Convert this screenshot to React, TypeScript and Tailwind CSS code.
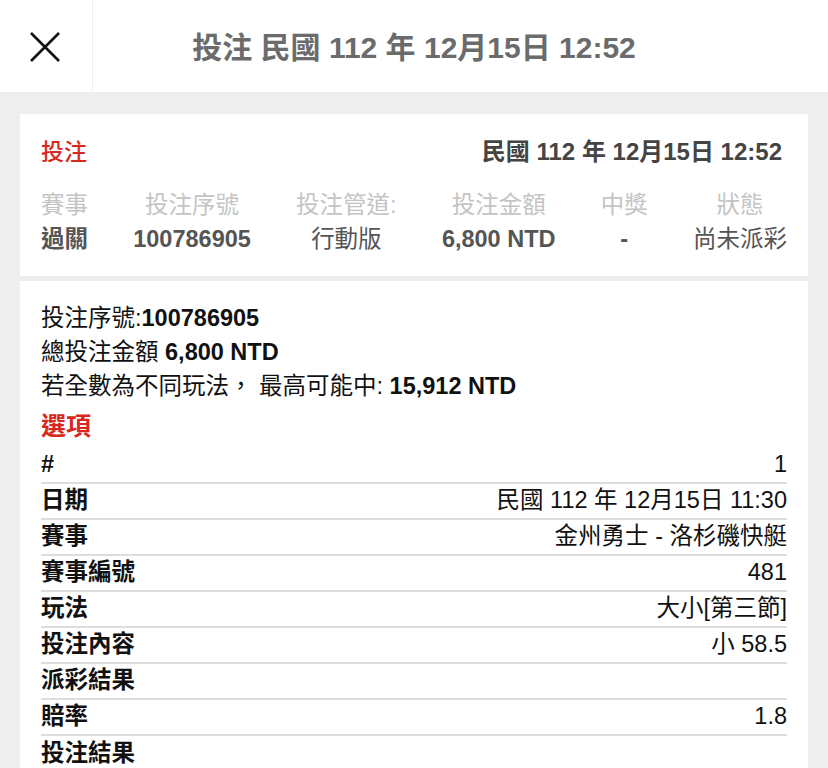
import React from "react";

const font = { fontFamily: '"Liberation Sans", "Noto Sans CJK TC", sans-serif' };

const cols = [
  { label: "賽事", value: "過關", bold: true },
  { label: "投注序號", value: "100786905", bold: true },
  { label: "投注管道:", value: "行動版", bold: false },
  { label: "投注金額", value: "6,800 NTD", bold: true },
  { label: "中獎", value: "-", bold: true },
  { label: "狀態", value: "尚未派彩", bold: false },
];

const rows: [string, string][] = [
  ["#", "1"],
  ["日期", "民國 112 年 12月15日 11:30"],
  ["賽事", "金州勇士 - 洛杉磯快艇"],
  ["賽事編號", "481"],
  ["玩法", "大小[第三節]"],
  ["投注內容", "小 58.5"],
  ["派彩結果", ""],
  ["賠率", "1.8"],
  ["投注結果", ""],
];

export default function App() {
  return (
    <div style={font} className="w-[828px] h-[768px] overflow-hidden bg-[#eeeeee]">
      <div className="relative h-[92px] bg-white flex items-center">
        <div className="w-[93px] h-full border-r border-[#eeeeee] flex items-center justify-center">
          <svg width="34" height="34" viewBox="0 0 34 34" className="mr-[2px] mt-[2px]">
            <path d="M3 3 L31 31 M31 3 L3 31" stroke="#111" strokeWidth="2.6" fill="none" />
          </svg>
        </div>
        <div className="absolute left-0 right-0 top-0 h-full flex items-center justify-center pointer-events-none">
          <span className="text-[30px] font-bold text-[#6b6b6b] mt-[2px]">投注 民國 112 年 12月15日 12:52</span>
        </div>
      </div>

      <div className="px-[20px] pt-[22px]">
        <div className="bg-white pl-[21px] pr-[21px] pt-[22px] pb-[20px]">
          <div className="flex items-center justify-between h-[32px]">
            <span className="text-[23px] text-[#d8281d] font-medium">投注</span>
            <span className="text-[24px] font-bold text-[#444] mr-[5px]">民國 112 年 12月15日 12:52</span>
          </div>
          <div className="flex justify-between mt-[20px]">
            {cols.map((c) => (
              <div key={c.label} className="flex flex-col items-center">
                <span className="text-[23.5px] leading-[34px] text-[#c4c4c4]">{c.label}</span>
                <span className={`text-[23.5px] leading-[34px] text-[#555] ${c.bold ? "font-bold" : ""}`}>{c.value}</span>
              </div>
            ))}
          </div>
        </div>

        <div className="bg-white mt-[5px] px-[21px] pt-[20px] pb-[20px] text-[#111]">
          <div className="text-[23.5px] leading-[34px]">
            投注序號:<span className="font-bold">100786905</span>
          </div>
          <div className="text-[23.5px] leading-[34px]">
            總投注金額 <span className="font-bold">6,800 NTD</span>
          </div>
          <div className="text-[23.5px] leading-[34px]">
            若全數為不同玩法， 最高可能中: <span className="font-bold">15,912 NTD</span>
          </div>
          <div className="text-[25px] leading-[40px] font-bold text-[#d8281d] mt-[3px]">選項</div>
          <div className="mt-[2px]">
            {rows.map(([k, v], i) => (
              <div
                key={k}
                className={`flex justify-between items-center h-[36px] text-[23.5px] ${i < rows.length - 1 ? "border-b-2 border-[#dddddd]" : ""}`}
              >
                <span className="font-bold">{k}</span>
                <span>{v}</span>
              </div>
            ))}
          </div>
        </div>
      </div>
    </div>
  );
}
